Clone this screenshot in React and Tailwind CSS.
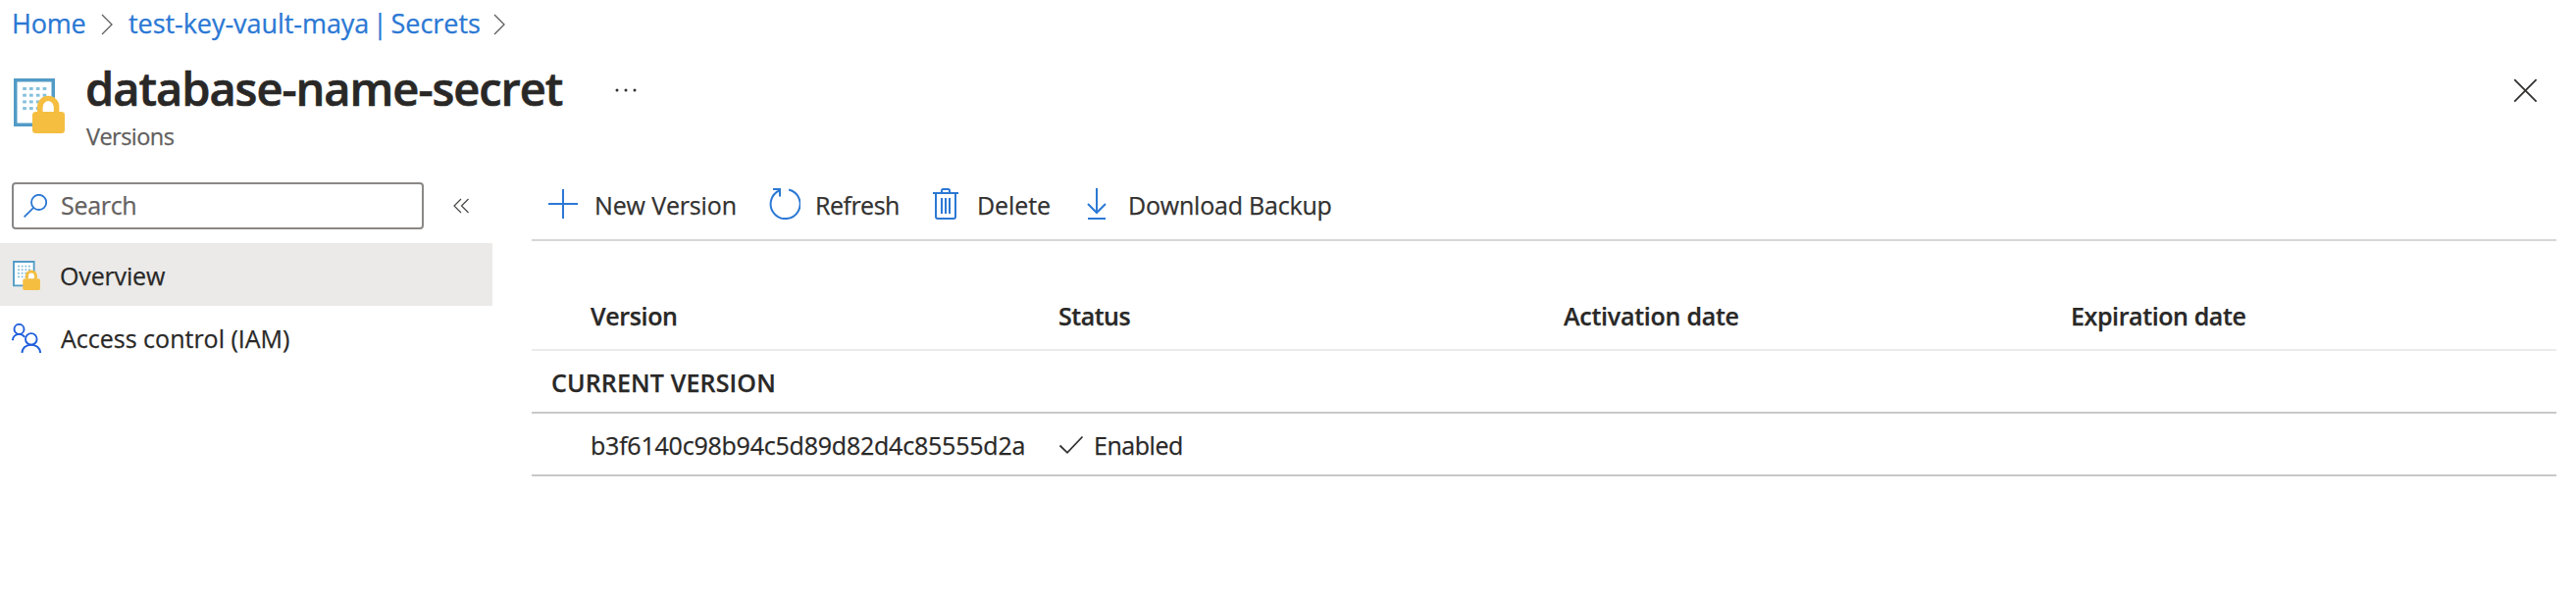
import React from "react";

function SecretIcon({ className }) {
  const dots = [0, 1, 2, 3];
  return (
    <svg className={className} viewBox="0 0 52 56" fill="none">
      <path d="M1.75 1.75h38.5v45.5H1.75z" fill="#fff" stroke="#529bc6" strokeWidth="3.5" />
      {dots.map((r) =>
        dots.map((c) => (
          <rect key={`${r}-${c}`} x={9.2 + c * 6.8} y={9 + r * 6.7} width="3.7" height="3" fill="#86c0dc" />
        ))
      )}
      <path d="M24 34v-5a11.2 11.2 0 0 1 22.4 0v5z" fill="#f5be41" />
      <path d="M29.6 34.5v-5a5.6 6.4 0 0 1 11.2 0v5z" fill="#fff" />
      <rect x="19" y="34" width="33" height="22" rx="3.5" fill="#f5be41" />
    </svg>
  );
}

function Crumb({ className }) {
  return (
    <svg className={className} width="12" height="22" viewBox="0 0 12 22" fill="none" stroke="#605e5c" strokeWidth="1.3">
      <path d="M1 1l10 10L1 21" />
    </svg>
  );
}

const blue = "#2b78d4";

function Row({ children, className }) {
  return <div className={`flex items-center border-b-2 leading-8 ${className}`}>{children}</div>;
}

export default function App() {
  return (
    <div className="h-[606px] w-[2626px] overflow-hidden bg-white font-['Open_Sans','Noto_Sans',sans-serif] text-[25px] whitespace-nowrap text-[#292827] [-webkit-text-stroke:0.25px]">
      <nav className="flex h-12 items-center pl-[12px] text-[27px] leading-[46px] text-[#2b78d4]">
        <a className="w-[91px] tracking-[-0.2px]">Home</a>
        <Crumb className="mt-[2px]" />
        <a className="ml-4 w-[372px] tracking-[-0.05px] [word-spacing:-3.2px]">test-key-vault-maya | Secrets</a>
        <Crumb className="mt-[2px]" />
      </nav>

      <header className="flex h-32 items-start pl-[14px]">
        <SecretIcon className="mt-8 h-14 w-[52px]" />
        <div className="ml-[21px] w-[539px] pt-3">
          <h1 className="text-[47px] leading-[60px] font-semibold tracking-[-1.05px] [-webkit-text-stroke:0.6px]">database-name-secret</h1>
          <p className="pt-[3px] pl-px text-[23.5px] leading-8 tracking-[-0.55px] text-[#605e5c]">Versions</p>
        </div>
        <svg className="mt-[42px]" width="24" height="4" viewBox="0 0 24 4" fill="#323130">
          <circle cx="3" cy="2" r="1.5" />
          <circle cx="12" cy="2" r="1.5" />
          <circle cx="21" cy="2" r="1.5" />
        </svg>
        <svg className="mt-8 mr-[39px] ml-auto" width="25" height="25" viewBox="0 0 25 25" stroke="#323130" strokeWidth="1.8">
          <path d="M1.2 1.2l22.4 22.4M23.6 1.2L1.2 23.6" />
        </svg>
      </header>

      <div className="flex">
        <aside className="w-[502px] pt-[10px]">
          <div className="flex h-12 items-center pl-3">
            <div className="flex h-12 w-[420px] items-center rounded-[4px] border-2 border-[#8a8886] pl-[10px]">
              <svg width="24" height="24" viewBox="0 0 24 24" fill="none" stroke={blue} strokeWidth="1.8">
                <circle cx="15.6" cy="8.4" r="7.6" />
                <path d="M10.2 13.8L.6 23.4" />
              </svg>
              <span className="ml-[14px] tracking-[-0.3px] text-[#646260]">Search</span>
            </div>
            <svg className="ml-[30px]" width="17" height="16" viewBox="0 0 17 16" fill="none" stroke="#484644" strokeWidth="1.2">
              <path d="M8 1L1 8l7 7M15.5 1l-7 7 7 7" />
            </svg>
          </div>
          <div className="mt-[14px] flex h-16 items-center bg-[#ebeae9] pl-[13px]">
            <SecretIcon className="mt-[2px] h-[30px] w-7" />
            <span className="ml-5 pt-[4px] tracking-[-0.15px]">Overview</span>
          </div>
          <div className="flex h-16 items-center pl-3">
            <svg className="mt-[2px]" width="30" height="30" viewBox="0 0 30 30" fill="none" stroke="#1f5fdc" strokeWidth="1.9">
              <circle cx="7.5" cy="5.9" r="5" />
              <path d="M.9 17.2c0-3.7 3-6.3 6.6-6.3 2.4 0 4.5 1.2 5.7 3.1" />
              <circle cx="19.8" cy="15.9" r="5.8" />
              <path d="M10.5 30c0-5 4.1-8.3 9.3-8.3s9.3 3.3 9.3 8.3" />
            </svg>
            <span className="ml-5 pt-[4px]">Access control (IAM)</span>
          </div>
        </aside>

        <main className="ml-10 w-[2064px]">
          <div className="flex h-[70px] items-center border-b-2 border-[#d6d6d6] pl-[17px] text-[#323130]">
            <svg className="-mt-[4px]" width="30" height="30" viewBox="0 0 30 30" stroke={blue} strokeWidth="2">
              <path d="M15 0v30M0 15h30" />
            </svg>
            <span className="-mt-[1px] ml-[17px] w-[178px] tracking-[-0.15px]">New Version</span>
            <svg className="-mt-[4px]" width="32" height="32" viewBox="0 0 32 32" fill="none" stroke={blue} strokeWidth="2">
              <path d="M20.1 1.5A15 15 0 1 1 11 2.2M4 1h7v7.5" />
            </svg>
            <span className="-mt-[1px] ml-[15px] w-[120px] tracking-[-0.5px]">Refresh</span>
            <svg className="-mt-[4px]" width="26" height="32" viewBox="0 0 26 32" fill="none" stroke={blue} strokeWidth="2">
              <path d="M0 5h26M9 5V2.5A1.5 1.5 0 0 1 10.5 1h5A1.5 1.5 0 0 1 17 2.5V5M3 5v24a2 2 0 0 0 2 2h16a2 2 0 0 0 2-2V5M9 10v16M13 10v16M17 10v16" />
            </svg>
            <span className="-mt-[1px] ml-[19px] w-[112px] tracking-[-0.1px]">Delete</span>
            <svg className="-mt-[4px]" width="20" height="32" viewBox="0 0 20 32" fill="none" stroke={blue} strokeWidth="2">
              <path d="M10 0v25M1 16l9 9 9-9M1 31h18" />
            </svg>
            <span className="-mt-[1px] ml-[22px] tracking-[-0.2px]">Download Backup</span>
          </div>

          <div className="mt-11">
            <Row className="h-[68px] border-[#ebebeb] pb-[2px] pl-[60px] font-semibold">
              <span className="w-[477px] tracking-[-0.35px]">Version</span>
              <span className="w-[515px] tracking-[-0.5px]">Status</span>
              <span className="w-[517px] tracking-[-0.25px]">Activation date</span>
              <span className="tracking-[-0.4px]">Expiration date</span>
            </Row>
            <Row className="h-16 border-[#c8c8c8] pt-[2px] pl-5 font-semibold">
              <span className="tracking-[0.15px]">CURRENT VERSION</span>
            </Row>
            <Row className="h-16 border-[#c8c8c8] pt-[2px] pl-[60px]">
              <span className="w-[477px] tracking-[-0.22px]">b3f6140c98b94c5d89d82d4c85555d2a</span>
              <svg className="-mt-[1px]" width="26" height="20" viewBox="0 0 26 20" fill="none" stroke="#323130" strokeWidth="1.8">
                <path d="M1.5 10.5l7.5 7.3L24.5 1.5" />
              </svg>
              <span className="ml-[10px] tracking-[-0.45px]">Enabled</span>
            </Row>
          </div>
        </main>
      </div>
    </div>
  );
}
